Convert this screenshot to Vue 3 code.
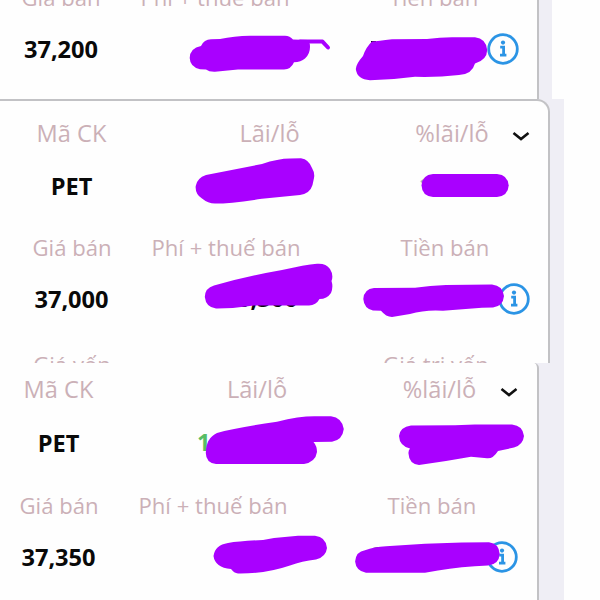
<script setup>
const sections = [
  {
    id: 'first',
    rows: [
      { kind: 'detail label', cells: ['Giá bán', 'Phí + thuế bán', 'Tiền bán'] },
      { kind: 'detail value price', cells: ['37,200', '', ''], icon: 'info' },
    ],
  },
  {
    id: 'second',
    rows: [
      { kind: 'summary label', cells: ['Mã CK', 'Lãi/lỗ', '%lãi/lỗ'], icon: 'chevron' },
      { kind: 'summary value code', cells: ['PET', '', ''] },
      { kind: 'detail label below', cells: ['Giá bán', 'Phí + thuế bán', 'Tiền bán'] },
      { kind: 'detail value price', cells: ['37,000', '', ''], icon: 'info' },
      { kind: 'detail label cost', cells: ['Giá vốn', '', 'Giá trị vốn'] },
    ],
  },
  {
    id: 'third',
    rows: [
      { kind: 'summary label', cells: ['Mã CK', 'Lãi/lỗ', '%lãi/lỗ'], icon: 'chevron' },
      { kind: 'summary value code', cells: ['PET', '', ''] },
      { kind: 'detail label below', cells: ['Giá bán', 'Phí + thuế bán', 'Tiền bán'] },
      { kind: 'detail value price', cells: ['37,350', '', ''], icon: 'info' },
    ],
  },
]

const strokes = [
  'M201 46 Q204 39.5 211 39.3 L220 39 Q234 36 250 35.8 L285 35.8 Q290 36 293 39.5 L308 40 L309.8 44 Q311 53 305 58.5 Q301 62 294 62.2 Q291 69.3 284 69.4 L238 69.5 L215 71.8 Q209 72 206 69.5 L200 69.2 Q190 67 189.7 58 Q190 48 201 46Z',
  'M372 41.5 Q378 41 392 39.3 L427 39 Q440 37.3 452 37.3 L475 37.3 Q486 38.5 487.2 50 Q487 60 475 63.5 Q472 74.5 459 75 Q437 77.5 415 76.8 Q392 80 370 80.2 Q357 79.5 355.8 69 Q356 64 363 56 Q366 47 372 41.5Z',
  'M206 175 L262 164 Q278 158.5 290 158.5 L301 158.2 Q309 159.5 312 168 Q315 173 314 178 L312.5 185 Q310 193.5 300 195 L262 198.8 Q231 203.5 215 203.6 Q208 203.5 202 198.5 Q195 194 195.7 186 Q197 178 206 175Z',
  'M433 174 L497 174 Q508 175 508.7 185.5 Q508 196 497 197 L433 197 Q422 196 421.5 185.5 Q422 175 433 174Z',
  'M214 285.5 Q245 276.5 282 270 Q305 264.8 317 263.7 Q326 263 330 269 Q333.8 275 331.5 281 Q333.5 287 331 293 Q327 299 319.5 299 Q316 305.4 309 305.4 L254 305.5 Q235 308.5 216 308.4 Q206 307.5 204.8 297 Q205 288 214 285.5Z',
  'M374 288 L415 287.8 Q430 285.5 446 285 L492 284.6 Q503 285.8 504 296 Q503 306.5 493 307.4 L482 307.8 L443 310.7 Q425 309.5 410 314 L392 317 Q386 317 381 310.8 L373 310.5 Q364 308.5 363.3 299 Q364 289 374 288Z',
  'M217 433 Q235 428 277 421.7 Q300 416 316 416.3 L331 416.2 Q342 417.5 343.8 429 Q342.5 440 332 441.8 L313.5 442 Q317 446 317 452 Q315.5 462 304 464 L216 464 Q206 463 205.8 453 Q206 438 217 433Z',
  'M411 425.5 L455 425.3 L475 424.5 L512 424.4 Q523 425.5 524 436 Q523 445 514 447.5 L498 451 Q493 459 487 458.3 L471 456.8 L446 461 L419 465 Q409 464 408.4 453 Q408.5 450 410 448.5 Q399.5 446 399 436 Q400 427 411 425.5Z',
  'M228 543 Q240 541 263 540 L274 538 L298 535.7 L315 535.8 Q326 537 327 548 Q326 557 316 559.5 Q302 561 290 565.5 Q265 574 238 573.6 Q234 573 231 569 Q215 567.5 213.5 556 Q215 545 228 543Z',
  'M365 550.3 Q374 547 386 546.3 L425 543.7 L462 542.4 L489 542.3 Q499 543.5 499.7 554 Q499 564.5 488 565.5 Q461 566.5 438 570.5 L425 572.7 L366 572.8 Q356 571 355.1 561.5 Q356 551.5 365 550.3Z',
]
</script>

<template>
  <main class="collage">
    <section v-for="section in sections" :key="section.id" class="strip" :class="section.id">
      <div class="panel">
        <article class="card">
          <div v-for="(row, r) in section.rows" :key="r" class="row" :class="row.kind">
            <span v-for="(cell, c) in row.cells" :key="c" class="cell">{{ cell }}</span>
            <svg v-if="row.icon === 'info'" class="info" viewBox="0 0 32 32">
              <circle cx="16" cy="16" r="14.3" />
              <circle class="solid" cx="16" cy="9.6" r="2.1" />
              <path d="M13.2 14.2H16.6V22M13 22.2H19.4" />
            </svg>
            <svg v-if="row.icon === 'chevron'" class="chevron" viewBox="0 0 18 10">
              <path d="M1.5 2L9 8L16.5 2" />
            </svg>
          </div>
        </article>
      </div>
    </section>

    <span class="remnant fee">0,300</span>
    <span class="remnant gain">1</span>
    <span class="remnant rate">1</span>
    <svg class="markup" viewBox="0 0 600 600">
      <path class="edge" d="M371 42.3h5M373 549.3l7 -1" />
      <path v-for="(d, i) in strokes" :key="i" :d="d" />
      <path class="tail" d="M300 41.6H322.5L328 47.5" />
    </svg>
  </main>
</template>

<style>
body {
  margin: 0;
  background: #fff;
}
</style>

<style scoped>
.collage {
  position: relative;
  width: 600px;
  height: 600px;
  overflow: hidden;
  background: #fefefe;
  font-family: "Open Sans", "Noto Sans", sans-serif;
  font-size: 23.6px;
  line-height: 32px;
}
.strip {
  display: flex;
  overflow: hidden;
}
.panel {
  box-sizing: border-box;
  width: 564px;
  height: 100%;
  background: #efeef5;
}
.card {
  box-sizing: border-box;
  display: flex;
  flex-direction: column;
  width: 539px;
  height: 100%;
  background: #fefefe;
  border-right: 2px solid #c2c2c5;
  overflow: hidden;
}
.first { height: 99px; }
.first .panel { width: 552px; }
.first .card {
  justify-content: flex-end;
  padding-bottom: 34px;
}
.second { height: 264px; }
.second .card {
  width: 550px;
  padding-top: 16px;
  border-top: 2px solid #c2c2c5;
  border-top-right-radius: 13px;
}
.third { height: 237px; }
.third .card {
  padding-top: 10px;
  border-top-right-radius: 5px;
}
.row {
  display: grid;
  flex: none;
  align-items: center;
  height: 32px;
  white-space: nowrap;
}
.cell {
  display: flex;
  justify-content: center;
  height: 32px;
}
.summary { grid-template-columns: 143px 253px 112px 26px; }
.detail { grid-template-columns: 144px 164px 84px 106px 32px; }
.detail .cell:nth-child(3) { grid-column: 4; }
.label { color: #cbb0b7; }
.detail.label { font-size: 22.1px; }
.value {
  color: #090909;
  font-weight: 700;
}
.code { margin-top: 21px; }
.below { margin-top: 29px; }
.price { margin-top: 20px; }
.price .cell:first-child { margin-left: -1px; }
.cost { margin-top: 33px; }
.cost .cell:nth-child(3) { margin-left: -18px; }
.first .row { margin-left: -11px; }
.first .price .cell:first-child { margin-left: 0; }
.third .summary { margin-left: -13px; }
.third .summary .cell:nth-child(n + 2) { margin-left: 1px; }
.third .chevron { position: relative; left: 1px; }
.third .detail { margin-left: -13px; }
.third .detail .info { margin-left: 1px; }
.third .code { margin-top: 22px; }
.third .below { margin-top: 30px; }
.info {
  width: 32px;
  height: 32px;
  fill: none;
  stroke: #2b94e5;
  stroke-width: 2.8;
}
.info .solid {
  fill: #2b94e5;
  stroke: none;
}
.chevron {
  width: 18px;
  height: 10px;
  margin: 5px auto 0;
  fill: none;
  stroke: #111;
  stroke-width: 2.6;
}
.markup {
  position: absolute;
  inset: 0;
  width: 600px;
  height: 600px;
  fill: #a900ff;
}
.markup .tail {
  fill: none;
  stroke: #a900ff;
  stroke-width: 4;
  stroke-linecap: round;
  stroke-linejoin: round;
}
.markup .edge {
  stroke: #111;
  stroke-width: 2.5;
}
.remnant {
  position: absolute;
  font-weight: 700;
}
.fee {
  left: 237px;
  top: 282px;
  color: #090909;
}
.gain {
  left: 197px;
  top: 426px;
  color: #58bd65;
}
.rate {
  left: 419px;
  top: 169px;
  color: #9bb7b8;
}
</style>
